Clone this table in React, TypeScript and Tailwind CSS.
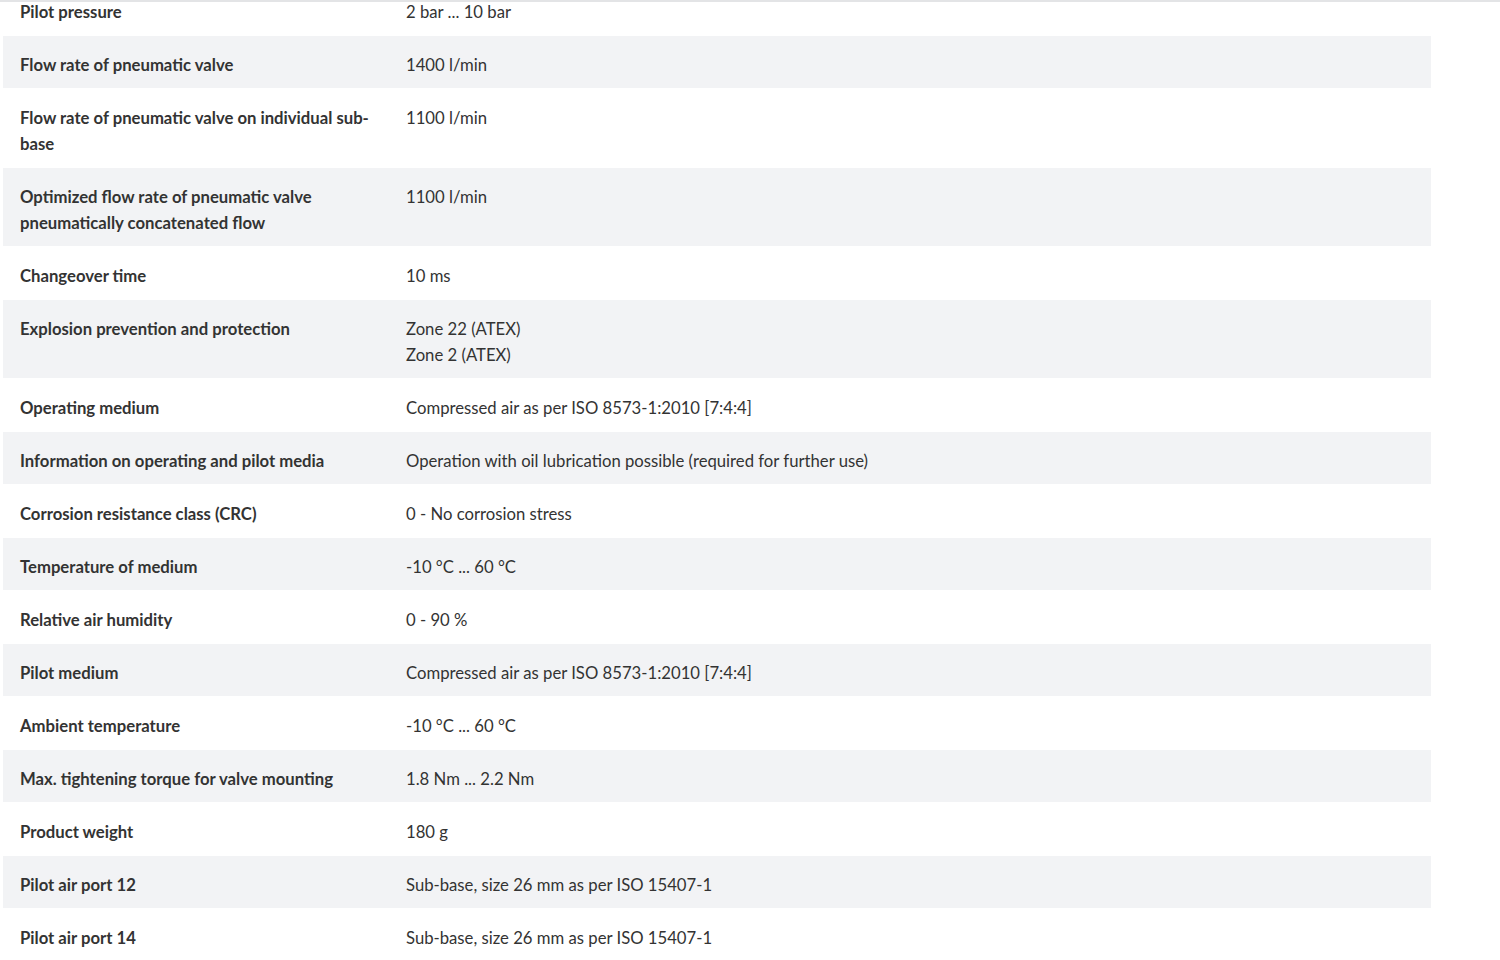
const specs: { label: string; value: string[] }[] = [
  { label: "Pilot pressure", value: ["2 bar ... 10 bar"] },
  { label: "Flow rate of pneumatic valve", value: ["1400 l/min"] },
  { label: "Flow rate of pneumatic valve on individual sub-base", value: ["1100 l/min"] },
  { label: "Optimized flow rate of pneumatic valve pneumatically concatenated flow", value: ["1100 l/min"] },
  { label: "Changeover time", value: ["10 ms"] },
  { label: "Explosion prevention and protection", value: ["Zone 22 (ATEX)", "Zone 2 (ATEX)"] },
  { label: "Operating medium", value: ["Compressed air as per ISO 8573-1:2010 [7:4:4]"] },
  { label: "Information on operating and pilot media", value: ["Operation with oil lubrication possible (required for further use)"] },
  { label: "Corrosion resistance class (CRC)", value: ["0 - No corrosion stress"] },
  { label: "Temperature of medium", value: ["-10 °C ... 60 °C"] },
  { label: "Relative air humidity", value: ["0 - 90 %"] },
  { label: "Pilot medium", value: ["Compressed air as per ISO 8573-1:2010 [7:4:4]"] },
  { label: "Ambient temperature", value: ["-10 °C ... 60 °C"] },
  { label: "Max. tightening torque for valve mounting", value: ["1.8 Nm ... 2.2 Nm"] },
  { label: "Product weight", value: ["180 g"] },
  { label: "Pilot air port 12", value: ["Sub-base, size 26 mm as per ISO 15407-1"] },
  { label: "Pilot air port 14", value: ["Sub-base, size 26 mm as per ISO 15407-1"] },
];

export default function App() {
  return (
    <div className="relative h-[960px] overflow-hidden bg-white font-['Lato',sans-serif] text-[16.7px] leading-[26px] text-[#333]">
      <div className="absolute left-0 right-0 top-0 h-[2px] bg-[#e3e4e6]" />

      <div className="ml-[3px] mt-[-17px] w-[1428px]">
        {specs.map((row, i) => (
          <div
            key={row.label}
            className={
              "grid grid-cols-[386px_1fr] border-b border-white pt-[16px] pb-[10px] " +
              (i % 2 === 1 ? "bg-[#f2f3f5]" : "bg-white")
            }
          >
            <div className="pl-[17px] pr-[16px] font-bold">{row.label}</div>
            <div className="pl-[17px]">
              {row.value.map((v) => (
                <div key={v}>{v}</div>
              ))}
            </div>
          </div>
        ))}
      </div>
    </div>
  );
}
